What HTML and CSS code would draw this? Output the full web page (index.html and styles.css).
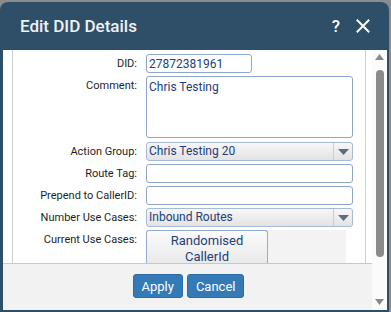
FILE: index.html
```html
<!DOCTYPE html>
<html>
<head>
<meta charset="utf-8">
<link rel="stylesheet" href="styles.css">
</head>
<body>
<div class="dialog">
  <div class="titlebar">
    <span class="title">Edit DID Details</span>
    <span class="tools">
      <span class="help">?</span>
      <svg class="close" width="14" height="14" viewBox="0 0 14 14"><path d="M1.5 1.5 L12.5 12.5 M12.5 1.5 L1.5 12.5" stroke="#fff" stroke-width="2" stroke-linecap="square"/></svg>
    </span>
  </div>
  <div class="body">
    <div class="main">
      <div class="content">
        <div class="panel">
          <div class="form">
            <label class="lbl">DID:</label>
            <div class="field"><input class="inp did" value="27872381961"></div>
            <label class="lbl">Comment:</label>
            <div class="field"><div class="textarea">Chris Testing</div></div>
            <label class="lbl">Action Group:</label>
            <div class="field"><div class="select"><span class="sel-text">Chris Testing 20</span><span class="sel-arrow"><svg width="11" height="6" viewBox="0 0 11 6"><path d="M0 0 H11 L5.5 6 Z" fill="#5b6b80"/></svg></span></div></div>
            <label class="lbl">Route Tag:</label>
            <div class="field"><div class="inp wide"></div></div>
            <label class="lbl">Prepend to CallerID:</label>
            <div class="field"><div class="inp wide"></div></div>
            <label class="lbl">Number Use Cases:</label>
            <div class="field"><div class="select"><span class="sel-text">Inbound Routes</span><span class="sel-arrow"><svg width="11" height="6" viewBox="0 0 11 6"><path d="M0 0 H11 L5.5 6 Z" fill="#5b6b80"/></svg></span></div></div>
            <label class="lbl">Current Use Cases:</label>
            <div class="field"><div class="cases"><div class="case-btn">Randomised<br>CallerId</div></div></div>
          </div>
        </div>
      </div>
      <div class="footer">
        <button class="btn">Apply</button>
        <button class="btn">Cancel</button>
      </div>
    </div>
    <div class="scrollbar">
      <svg class="arr" width="9" height="6" viewBox="0 0 9 6"><path d="M0 6 L4.5 0 L9 6 Z" fill="#8a8a8a"/></svg>
      <div class="thumb"></div>
      <div class="track-gap"></div>
      <svg class="arr" width="9" height="6" viewBox="0 0 9 6"><path d="M0 0 L9 0 L4.5 6 Z" fill="#8a8a8a"/></svg>
    </div>
  </div>
</div>
</body>
</html>
```

FILE: styles.css
```css
html, body {
  margin: 0;
  padding: 0;
}
body {
  background: #8c8c8c;
  width: 391px;
  height: 312px;
  overflow: hidden;
  font-family: Roboto, "Liberation Sans", sans-serif;
}
.dialog {
  margin: 2px 0 0 0;
  width: 389px;
  height: 310px;
  background: #2e4f67;
  border-radius: 8px 8px 0 0;
  box-sizing: border-box;
  display: flex;
  flex-direction: column;
}
.titlebar {
  height: 48px;
  flex: none;
  display: flex;
  align-items: center;
  justify-content: space-between;
  padding: 0 20px 0 20px;
  color: #fff;
}
.title {
  font-size: 17px;
  font-weight: 500;
  color: #eef2f5;
  margin-top: -1px;
}
.tools {
  display: flex;
  align-items: center;
  gap: 16px;
  margin-right: -1px;
}
.help {
  font-size: 17px;
  font-weight: 500;
  color: #fff;
}
.close {
  display: block;
}
.body {
  flex: 1;
  display: flex;
  margin: 0 2px 2px 3px;
  background: #fff;
  min-height: 0;
}
.main {
  flex: 1;
  display: flex;
  flex-direction: column;
  min-width: 0;
}
.content {
  height: 214px;
  flex: none;
  overflow: hidden;
  padding: 0 6px 0 9px;
  border-bottom: 1px solid #c8c8c8;
  box-sizing: border-box;
}
.panel {
  height: 100%;
  border-left: 1px solid #cfcfcf;
  border-right: 1px solid #cfcfcf;
  box-sizing: border-box;
}
.form {
  display: grid;
  grid-template-columns: 124px 1fr;
  column-gap: 9px;
  row-gap: 3px;
  padding-top: 4px;
}
.lbl {
  font-size: 11px;
  color: #1e1e1e;
  text-align: right;
  line-height: 13px;
  padding-top: 3px;
}
.field {
  display: flex;
}
.inp {
  height: 19px;
  box-sizing: border-box;
  border: 1px solid #8fa6cc;
  border-radius: 3px;
  background: #fff;
  font-family: Roboto, "Liberation Sans", sans-serif;
  font-size: 12px;
  color: #23407a;
  padding: 0 0 0 2px;
  margin: 0;
  outline: none;
}
.did {
  width: 106px;
}
.wide {
  width: 207px;
}
.textarea {
  width: 207px;
  height: 62px;
  box-sizing: border-box;
  border: 1px solid #8fa6cc;
  border-radius: 3px;
  font-size: 12px;
  color: #23407a;
  padding: 3px 2px;
  margin-bottom: 1px;
}
.select {
  width: 207px;
  height: 19px;
  box-sizing: border-box;
  border: 1px solid #a7bbd6;
  border-radius: 3px;
  background: linear-gradient(#f7f7f7, #e3e3e3);
  display: flex;
  align-items: stretch;
  font-size: 12px;
  color: #23407a;
}
.sel-text {
  flex: 1;
  padding-left: 2px;
  line-height: 17px;
}
.sel-arrow {
  width: 18px;
  border-left: 1px solid #c4cfdc;
  display: flex;
  align-items: center;
  justify-content: center;
}
.cases {
  width: 200px;
  height: 36px;
  background: #f3f3f3;
}
.case-btn {
  width: 122px;
  height: 36px;
  box-sizing: border-box;
  border: 1px solid #94acd2;
  border-bottom: none;
  border-radius: 3px 3px 0 0;
  background: linear-gradient(#fbfbfb, #e8e8e8);
  font-size: 13px;
  color: #23407a;
  text-align: center;
  line-height: 16px;
  padding-top: 2px;
}
.footer {
  flex: 1;
  background: #f2f2f2;
  display: flex;
  justify-content: center;
  align-items: flex-start;
  gap: 4px;
  padding-top: 10px;
  padding-left: 2px;
}
.btn {
  height: 24px;
  background: #337ab7;
  border: 1px solid #2b6aa3;
  border-radius: 3px;
  color: #fff;
  font-family: Roboto, "Liberation Sans", sans-serif;
  font-size: 13px;
  padding: 0 8px;
  margin: 0;
}
.scrollbar {
  width: 15px;
  flex: none;
  background: #fbfbfb;
  display: flex;
  flex-direction: column;
  align-items: center;
  padding: 4px 0 5px;
  box-sizing: border-box;
}
.arr {
  display: block;
  flex: none;
}
.thumb {
  width: 8px;
  height: 187px;
  margin-top: 10px;
  background: #8b8b8b;
  border-radius: 4px;
  flex: none;
}
.track-gap {
  flex: 1;
}
```
